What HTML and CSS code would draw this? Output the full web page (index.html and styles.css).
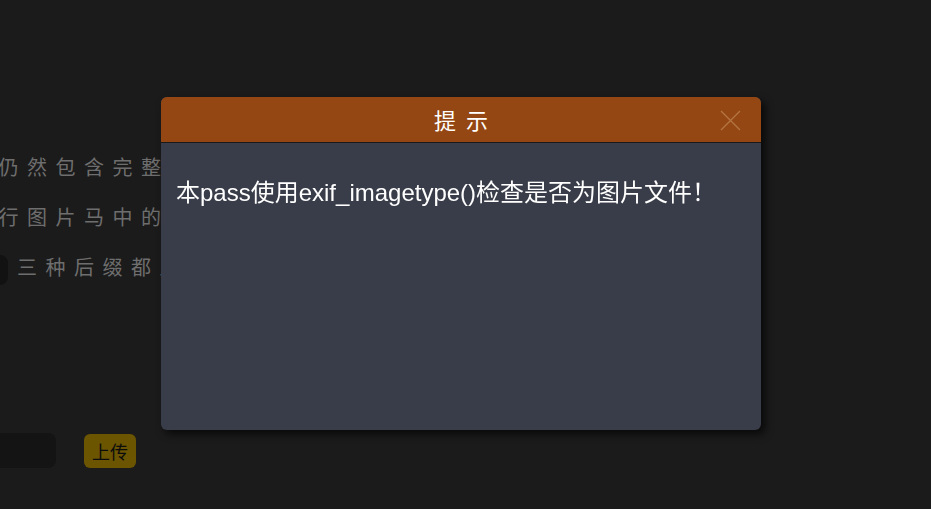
FILE: index.html
```html
<!DOCTYPE html>
<html lang="zh-CN">
<head>
  <meta charset="UTF-8">
  <meta name="viewport" content="width=device-width, initial-scale=1.0">
  <title>Pass-14</title>
  <link rel="stylesheet" href="styles.css">
</head>
<body>

<div class="page">
  <div class="intro">
    <p class="line">该文件仍然包含完整的图片马代码</p>
    <p class="line">从而执行图片马中的恶意代码</p>
    <p class="line line-code"><code class="tag">.gif</code>三种后缀都上传成功</p>
  </div>

  <form class="upload-form">
    <input type="file" class="file-input">
    <button type="button" class="btn-upload">上传</button>
  </form>
</div>

<!-- 提示弹窗 -->
<div class="dialog">
  <div class="dialog-title">
    提示
    <span class="dialog-close">
      <svg width="21" height="21" viewBox="0 0 21 21">
        <path d="M1 1 L20 20 M20 1 L1 20" stroke="#b47443" stroke-width="1.3" fill="none"/>
      </svg>
    </span>
  </div>
  <div class="dialog-content">本pass使用exif_imagetype()检查是否为图片文件！</div>
</div>

</body>
</html>
```

FILE: styles.css
```css
html, body {
  margin: 0;
  padding: 0;
}
body {
  background-color: #1b1b1b;
  font-family: "Liberation Sans", "Noto Sans CJK SC", sans-serif;
  height: 509px;
  overflow: hidden;
}
.page {
  margin-left: -87px;
  padding-top: 143px;
}
.line {
  margin: 0;
  font-size: 20px;
  line-height: 50px;
  letter-spacing: 8.5px;
  color: #6e6e6e;
  white-space: nowrap;
}
.line-code {
  text-indent: 43px;
}
.tag {
  display: inline-block;
  width: 52px;
  height: 30px;
  margin-right: 9px;
  text-indent: 0;
  letter-spacing: 0;
  vertical-align: middle;
  background-color: #121212;
  border-radius: 8px;
  color: #8a7a2a;
  font-size: 14px;
  line-height: 30px;
  text-align: right;
  padding-right: 9px;
  box-sizing: border-box;
  overflow: hidden;
}
.upload-form {
  display: flex;
  align-items: center;
  gap: 28px;
  margin-top: 140px;
  margin-left: 5px;
}
.file-input {
  width: 138px;
  height: 35px;
  border: none;
  border-radius: 8px;
  background-color: #141414;
  color: transparent;
  padding: 0;
}
.file-input::file-selector-button {
  display: none;
}
.btn-upload {
  width: 52px;
  height: 34px;
  border: none;
  border-radius: 6px;
  background-color: #6b5500;
  color: #0c0c0c;
  font-family: "Noto Sans CJK SC", sans-serif;
  font-size: 18px;
  padding: 0;
}
.dialog {
  position: fixed;
  left: 161px;
  top: 97px;
  width: 600px;
  height: 333px;
  background-color: #393d49;
  border-radius: 6px;
  box-shadow: 4px 4px 8px rgba(0, 0, 0, 0.7);
  overflow: hidden;
}
.dialog-title {
  position: relative;
  height: 45px;
  line-height: 45px;
  background-color: #944712;
  border-bottom: 1px solid #1a1a1a;
  color: #fff;
  font-family: "Noto Sans CJK SC", sans-serif;
  font-size: 22px;
  letter-spacing: 10px;
  padding-left: 10px;
  text-align: center;
}
.dialog-close {
  position: absolute;
  right: 20px;
  top: 13px;
  width: 21px;
  height: 21px;
  line-height: 0;
}
.dialog-content {
  padding: 33px 15px 15px;
  color: #fff;
  font-size: 24px;
  line-height: 34px;
}
```
